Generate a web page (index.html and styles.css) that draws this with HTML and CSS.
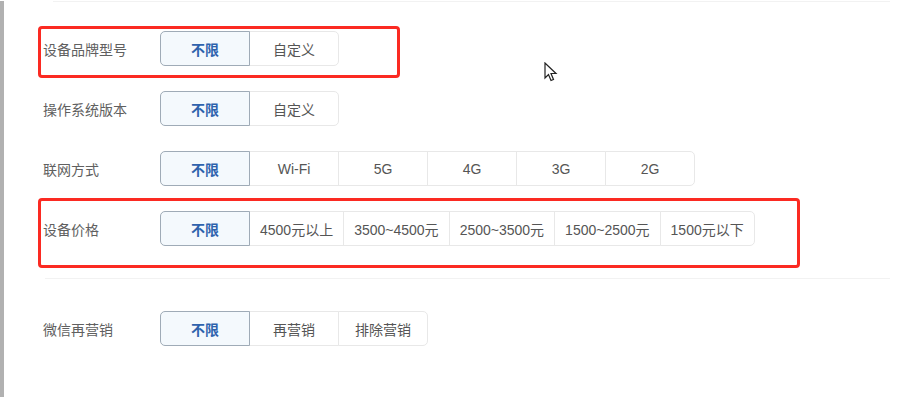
FILE: index.html
```html
<!DOCTYPE html>
<html lang="zh-CN">
<head>
    <meta charset="UTF-8">
    <meta name="viewport" content="width=device-width, initial-scale=1.0">
    <title>定向设置</title>
    <link rel="stylesheet" href="styles.css">
</head>
<body>
    <div class="page">
        <div class="panel">
            <div class="panel-top"></div>

            <div class="filter-row">
                <span class="filter-label">设备品牌型号</span>
                <div class="btn-group">
                    <button class="opt active">不限</button>
                    <button class="opt">自定义</button>
                </div>
            </div>

            <div class="filter-row">
                <span class="filter-label">操作系统版本</span>
                <div class="btn-group">
                    <button class="opt active">不限</button>
                    <button class="opt">自定义</button>
                </div>
            </div>

            <div class="filter-row">
                <span class="filter-label">联网方式</span>
                <div class="btn-group">
                    <button class="opt active">不限</button>
                    <button class="opt">Wi-Fi</button>
                    <button class="opt">5G</button>
                    <button class="opt">4G</button>
                    <button class="opt">3G</button>
                    <button class="opt">2G</button>
                </div>
            </div>

            <div class="filter-row">
                <span class="filter-label">设备价格</span>
                <div class="btn-group">
                    <button class="opt active">不限</button>
                    <button class="opt">4500元以上</button>
                    <button class="opt">3500~4500元</button>
                    <button class="opt">2500~3500元</button>
                    <button class="opt">1500~2500元</button>
                    <button class="opt">1500元以下</button>
                </div>
            </div>

            <div class="divider"></div>

            <div class="filter-row">
                <span class="filter-label">微信再营销</span>
                <div class="btn-group">
                    <button class="opt active">不限</button>
                    <button class="opt">再营销</button>
                    <button class="opt">排除营销</button>
                </div>
            </div>

            <!-- annotation boxes drawn over the form -->
            <div class="mark mark-brand"></div>
            <div class="mark mark-price"></div>

            <svg class="cursor" width="14" height="20" viewBox="0 0 14 20">
                <path d="M1 1 L1 16 L4.5 12.5 L7 18.5 L9.5 17.5 L7 11.5 L12 11.5 Z" fill="#fff" stroke="#222" stroke-width="1.2" stroke-linejoin="miter"/>
            </svg>
        </div>
    </div>
</body>
</html>
```

FILE: styles.css
```css
* {
    margin: 0;
    padding: 0;
    box-sizing: border-box;
}

body {
    font-family: "Liberation Sans", "Noto Sans CJK SC", sans-serif;
    background: #fff;
    color: #555;
    font-size: 14px;
}

.page {
    min-height: 100vh;
    border-left: 4px solid #b1b1b1;
}

.panel {
    position: relative;
    padding-left: 39px;
    padding-right: 29px;
}

.panel-top {
    height: 1px;
    margin-top: 1px;
    margin-left: 10px;
    background: #f2f2f2;
}

.filter-row {
    display: flex;
    align-items: center;
    height: 35px;
    margin-top: 25px;
}

.panel-top + .filter-row {
    margin-top: 29px;
}

.divider + .filter-row {
    margin-top: 0;
}

.filter-label {
    width: 117px;
    flex-shrink: 0;
    color: #606060;
    font-size: 14px;
}

.btn-group {
    display: flex;
    height: 35px;
}

.opt {
    position: relative;
    min-width: 90px;
    height: 35px;
    padding: 0 10px;
    margin-left: -1px;
    border: 1px solid #e8e8e8;
    background: #fff;
    color: #555;
    font-family: inherit;
    font-size: 14px;
    cursor: pointer;
}

.opt:first-child {
    margin-left: 0;
    border-radius: 5px 0 0 5px;
}

.opt:last-child {
    border-radius: 0 5px 5px 0;
}

.opt.active {
    z-index: 1;
    background: #f4f9fd;
    border-color: #9fabb7;
    color: #2f63ad;
    font-weight: 600;
}

.divider {
    height: 1px;
    margin: 32px 0 32px 2px;
    background: #f2f2f2;
}

.mark {
    position: absolute;
    border: 3px solid #fb2a22;
    border-radius: 4px;
    pointer-events: none;
}

.mark-brand {
    left: 34px;
    top: 25px;
    width: 362px;
    height: 52px;
}

.mark-price {
    left: 34px;
    top: 197px;
    width: 762px;
    height: 70px;
}

.cursor {
    position: absolute;
    left: 540px;
    top: 61px;
}
```
